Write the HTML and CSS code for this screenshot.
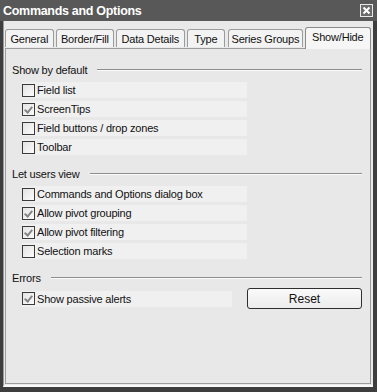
FILE: index.html
```html
<!DOCTYPE html>
<html lang="en">
<head>
  <meta charset="UTF-8">
  <title>Commands and Options</title>
  <link rel="stylesheet" href="styles.css">
</head>
<body>
  <div class="window">
    <div class="titlebar">
      <span class="title">Commands and Options</span>
      <span class="close">
        <svg width="13" height="13" viewBox="0 0 13 13">
          <rect x="0.5" y="0.5" width="12" height="12" fill="#6a6a6a" stroke="#e8e8e8"/>
          <path d="M3.5 3.5 L9.5 9.5 M9.5 3.5 L3.5 9.5" stroke="#fff" stroke-width="2"/>
        </svg>
      </span>
    </div>
    <div class="client">
      <div class="tabs">
        <div class="tab t-general">General</div>
        <div class="tab t-border">Border/Fill</div>
        <div class="tab t-data">Data Details</div>
        <div class="tab t-type">Type</div>
        <div class="tab t-series">Series Groups</div>
        <div class="tab active">Show/Hide</div>
      </div>
      <div class="panel">
        <div class="group-head"><span>Show by default</span><div class="rule"></div></div>
        <div class="row"><span class="box"></span>Field list</div>
        <div class="row"><span class="box checked"></span>ScreenTips</div>
        <div class="row"><span class="box"></span>Field buttons / drop zones</div>
        <div class="row"><span class="box"></span>Toolbar</div>

        <div class="group-head"><span>Let users view</span><div class="rule"></div></div>
        <div class="row"><span class="box"></span>Commands and Options dialog box</div>
        <div class="row"><span class="box checked"></span>Allow pivot grouping</div>
        <div class="row"><span class="box checked"></span>Allow pivot filtering</div>
        <div class="row"><span class="box"></span>Selection marks</div>

        <div class="group-head"><span>Errors</span><div class="rule"></div></div>
        <div class="errors">
          <div class="row short"><span class="box checked"></span>Show passive alerts</div>
          <button class="reset">Reset</button>
        </div>
      </div>
    </div>
  </div>
</body>
</html>
```

FILE: styles.css
```css
body {
  margin: 0;
  font-family: "Liberation Sans", Arial, sans-serif;
  font-size: 11px;
  letter-spacing: -0.2px;
  color: #111;
}

.window {
  width: 377px;
  height: 392px;
  background: #3e3e3e;
  display: flex;
  flex-direction: column;
  box-sizing: border-box;
  padding: 0 4px 5px 3px;
}

.titlebar {
  height: 21px;
  margin: 0 -4px 0 -3px;
  padding: 0 4px 0 3px;
  background: #585858;
  display: flex;
  align-items: center;
  justify-content: space-between;
}

.title {
  color: #fff;
  font-weight: bold;
  font-size: 12.5px;
  letter-spacing: -0.3px;
}

.close {
  display: flex;
}

.client {
  flex: 1;
  background: #e9e9e9;
  border-left: 1px solid #9a9a9a;
  border-bottom: 2px solid #fafafa;
  display: flex;
  flex-direction: column;
  padding: 6px 2px 1px 1px;
}

.tabs {
  display: flex;
  align-items: flex-end;
  height: 21px;
  gap: 2px;
  position: relative;
  z-index: 1;
}

.tab {
  height: 18px;
  box-sizing: border-box;
  border: 1px solid #9c9c9c;
  border-bottom: none;
  border-radius: 3px 3px 0 0;
  background: #f3f3f3;
  display: flex;
  align-items: center;
  justify-content: center;
  white-space: nowrap;
  margin-bottom: 1px;
  padding-top: 1px;
}

.t-general { width: 49px; }
.t-border { width: 59px; }
.t-data { width: 69px; }
.t-type { width: 39px; margin-right: 1px; }
.t-series { width: 75px; }

.tab.active {
  width: 67px;
  height: 22px;
  margin-bottom: -1px;
  background: #f6f6f6;
  padding: 0 0 3px;
  border-color: #8a8a8a;
}

.panel {
  flex: 1;
  background: #e8e8e8;
  border: 1px solid #9c9c9c;
  padding: 14px 8px 0 6px;
}

.group-head {
  display: flex;
  align-items: center;
  height: 14px;
  margin-bottom: 5px;
}

.group-head span {
  margin-right: 10px;
}

.rule {
  flex: 1;
  border-top: 1px solid #8e8e8e;
  border-bottom: 1px solid #fafafa;
}

.row {
  display: flex;
  align-items: center;
  width: 225px;
  height: 16px;
  margin: 0 0 3px 10px;
  background: #f0f0f0;
}

.row.short {
  width: 210px;
  margin-bottom: 0;
}

.row + .group-head {
  margin-top: 12px;
}

.box {
  width: 13px;
  height: 13px;
  box-sizing: border-box;
  border: 1px solid #3a3a3a;
  background: linear-gradient(135deg, #e4e4e4, #fbfbfb);
  margin-right: 2px;
  position: relative;
}

.box.checked::after {
  content: "";
  position: absolute;
  left: 3px;
  top: 1px;
  width: 3px;
  height: 6px;
  border: solid #858585;
  border-width: 0 2px 2px 0;
  transform: rotate(40deg);
}

.errors {
  display: flex;
  align-items: center;
  justify-content: space-between;
  margin-top: -2px;
}

.reset {
  width: 115px;
  height: 21px;
  border: 1px solid #2e2e2e;
  border-radius: 3px;
  background: linear-gradient(#fafafa, #ececec);
  font-family: "Liberation Sans", Arial, sans-serif;
  font-size: 12px;
  color: #111;
}
```
